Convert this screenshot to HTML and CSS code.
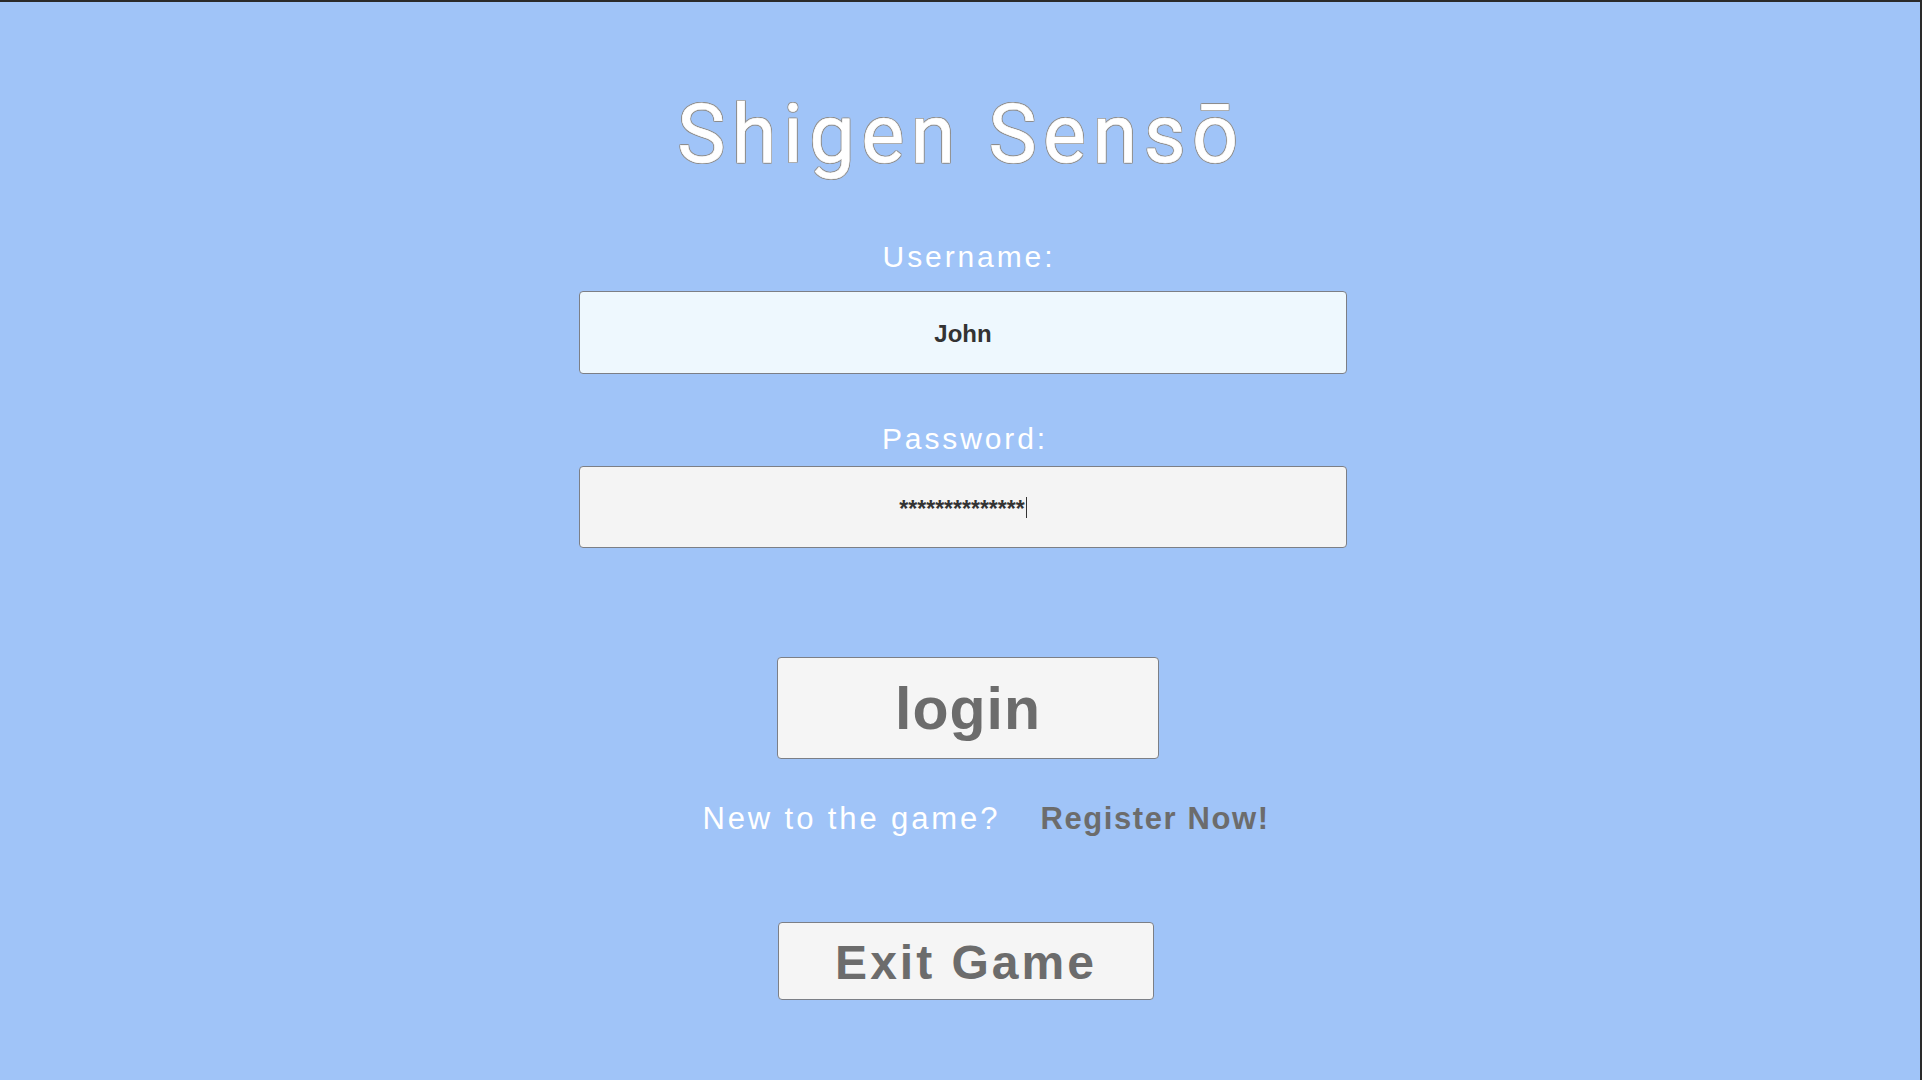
FILE: index.html
```html
<!DOCTYPE html>
<html lang="en">
<head>
<meta charset="utf-8">
<title>Shigen Sensō</title>
<link rel="stylesheet" href="styles.css">
</head>
<body>
<main class="screen">
  <h1 class="title">Shigen Sensō</h1>
  <label class="label label-user" for="user">Username:</label>
  <div class="field field-user" id="user">John</div>
  <label class="label label-pass" for="pass">Password:</label>
  <div class="field field-pass" id="pass"><span class="stars">**************</span><span class="caret"></span></div>
  <button class="btn btn-login" type="button">login</button>
  <div class="register-row">
    <span class="new">New to the game?</span>
    <a class="register" href="#">Register Now!</a>
  </div>
  <button class="btn btn-exit" type="button">Exit Game</button>
</main>
</body>
</html>
```

FILE: styles.css
```css
html, body {
  margin: 0;
  padding: 0;
}
body {
  width: 1922px;
  height: 1080px;
  box-sizing: border-box;
  background: #a0c4f8;
  border-top: 2px solid #2a2a2a;
  border-right: 2px solid #2a2a2a;
  overflow: hidden;
  font-family: "Liberation Sans", Arial, sans-serif;
}
.screen {
  display: flex;
  flex-direction: column;
  align-items: center;
  padding-left: 6px;
}
.title {
  margin: 93px 0 0 -4px;
  font-family: Roboto, "Liberation Sans", sans-serif;
  font-weight: 400;
  font-size: 81px;
  line-height: 80px;
  letter-spacing: 6.5px;
  color: #ffffff;
  -webkit-text-stroke: 0.6px #ffffff;
  text-shadow: -1px 0 0 #8a8a8a, 1px 0 0 #8a8a8a, 0 -1px 0 #8a8a8a, 0 1px 0 #8a8a8a,
    -1px -1px 0 #9a9a9a, 1px 1px 0 #9a9a9a, -1px 1px 0 #9a9a9a, 1px -1px 0 #9a9a9a;
}
.label {
  display: block;
  font-size: 30px;
  line-height: 31px;
  letter-spacing: 2.9px;
  color: #ffffff;
}
.label-user {
  margin: 66px 0 0 12px;
}
.label-pass {
  margin: 49px 0 0 4px;
}
.field {
  box-sizing: border-box;
  width: 768px;
  height: 83px;
  border: 1px solid #7c7f86;
  border-radius: 4px;
  display: flex;
  align-items: center;
  justify-content: center;
  font-weight: 700;
  font-size: 24px;
  color: #333333;
}
.field-user {
  margin-top: 19px;
  background: #eef8fe;
  padding-top: 2px;
}
.field-pass {
  margin-top: 12px;
  height: 82px;
  background: #f4f4f4;
}
.stars {
  font-size: 23px;
  letter-spacing: 0;
  line-height: 1;
  margin-top: 4px;
}
.caret {
  width: 1px;
  height: 21px;
  background: #333333;
  margin-left: 1px;
}
.btn {
  box-sizing: border-box;
  border: 1px solid #7c7f86;
  border-radius: 4px;
  background: #f5f5f5;
  color: #6c6c6c;
  font-family: "Liberation Sans", Arial, sans-serif;
  font-weight: 700;
  padding: 0;
  display: flex;
  align-items: center;
  justify-content: center;
}
.btn-login {
  margin: 109px 0 0 10px;
  width: 382px;
  height: 102px;
  font-size: 59px;
  letter-spacing: 1px;
  padding-top: 2px;
}
.register-row {
  display: flex;
  gap: 40px;
  margin: 44px 0 0 46px;
  font-size: 31px;
  line-height: 31px;
}
.new {
  color: #ffffff;
  letter-spacing: 2.9px;
}
.register {
  color: #6c6c6c;
  font-weight: 700;
  text-decoration: none;
  letter-spacing: 1.6px;
}
.btn-exit {
  margin: 88px 0 0 6px;
  width: 376px;
  height: 78px;
  font-size: 48px;
  letter-spacing: 3px;
  padding-top: 2px;
}
```
